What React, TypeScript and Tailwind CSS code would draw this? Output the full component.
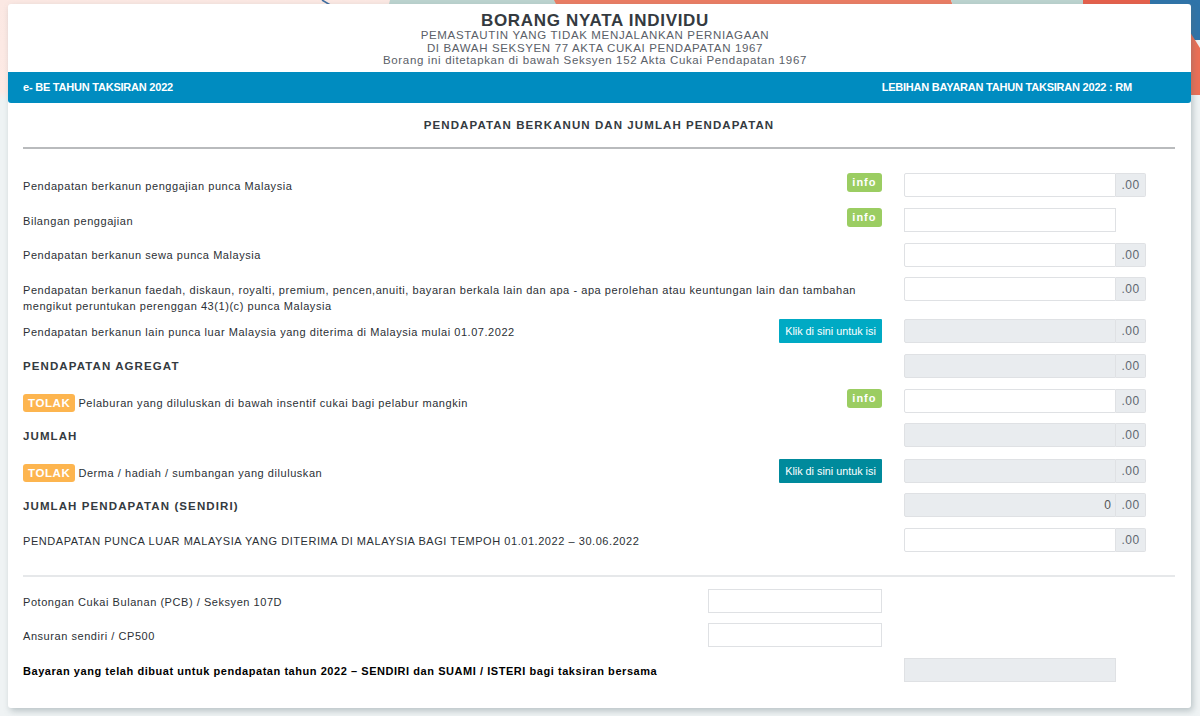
import React from 'react';

const font = { fontFamily: '"Liberation Sans", Arial, sans-serif' };

function Background() {
  return (
    <svg className="absolute inset-0 w-full h-full" viewBox="0 0 1200 716" preserveAspectRatio="none">
      <defs>
        <linearGradient id="left" x1="0" y1="0" x2="0" y2="1">
          <stop offset="0" stopColor="#fbe8e3" />
          <stop offset="0.57" stopColor="#fdeae5" />
          <stop offset="0.63" stopColor="#eef3f4" />
          <stop offset="1" stopColor="#eef3f4" />
        </linearGradient>
      </defs>
      <rect width="1200" height="716" fill="#eff3f4" />
      <rect x="0" y="0" width="400" height="160" fill="url(#left)" />
      <polygon points="390,0 555,0 561,12 387,12" fill="#bcd3cf" />
      <polygon points="554,0 951,0 955,12 560,12" fill="#ea7d64" />
      <polygon points="951,0 1083,0 1085,12 955,12" fill="#bcd3cf" />
      <rect x="1083" y="0" width="68" height="12" fill="#e5604c" />
      <rect x="1150" y="0" width="50" height="40" fill="#2f74a9" />
      <polygon points="1190,32 1200,48 1200,95 1190,95" fill="#ec6f55" />
      <line x1="322" y1="0" x2="332" y2="6" stroke="#3f6ea0" strokeWidth="1.5" />
    </svg>
  );
}

function Info() {
  return (
    <span className="inline-block bg-[#9bcd62] text-white text-[11px] font-bold tracking-[1px] leading-[18px] h-[19px] px-[5.5px] rounded-[3px]">
      info
    </span>
  );
}

function Tolak() {
  return (
    <span className="inline-block bg-[#fdb54f] text-white text-[11.5px] font-bold tracking-[0.6px] leading-[18px] h-[18px] px-[5px] rounded-[3px] mr-[3px]">
      TOLAK
    </span>
  );
}

function KlikBtn({ dark }: { dark?: boolean }) {
  return (
    <button
      className={`h-[24px] w-[103px] text-white text-[10.8px] rounded-[1px] whitespace-nowrap ${dark ? 'bg-[#008a9c]' : 'bg-[#00aac4]'}`}
    >
      Klik di sini untuk isi
    </button>
  );
}

function Amount({ grey, noAddon, value }: { grey?: boolean; noAddon?: boolean; value?: string }) {
  return (
    <div className="flex w-[242px] h-[24px] shrink-0">
      <div
        className={`w-[212px] h-[24px] border border-[#dfe1e4] text-right pr-[4px] text-[12px] leading-[22px] text-[#555] ${noAddon ? '' : 'rounded-l-[2px]'} ${grey ? 'bg-[#e9ecef]' : 'bg-white'}`}
      >
        {value}
      </div>
      {!noAddon && (
        <div className="w-[30px] h-[24px] bg-[#e9ecef] border border-l-0 border-[#dfe1e4] rounded-r-[2px] text-center text-[12px] tracking-[0.5px] leading-[23px] text-[#5f6770]">
          .00
        </div>
      )}
    </div>
  );
}

function Row({ className, side, children, amount }: { className?: string; side?: React.ReactNode; children: React.ReactNode; amount: React.ReactNode }) {
  return (
    <div className={`flex items-start ${className ?? ''}`}>
      <div className="flex-1 min-w-0 text-[11px] tracking-[0.55px] text-[#2b3035]">{children}</div>
      <div className="w-[110px] flex justify-end shrink-0">{side}</div>
      <div className="w-[22px] shrink-0" />
      {amount}
      <div className="w-[29px] shrink-0" />
    </div>
  );
}

function Heading({ children }: { children: React.ReactNode }) {
  return <span className="text-[11.5px] font-bold tracking-[1.1px] text-[#343a40]">{children}</span>;
}

export default function App() {
  return (
    <div className="relative w-[1200px] h-[716px] overflow-hidden" style={font}>
      <Background />
      <div className="relative pt-[4px] pl-[8px]">
        <div className="w-[1183px] h-[704px] bg-white rounded-[3px] shadow-[2px_3px_6px_rgba(90,110,115,0.35)]">
          <div className="h-[68px] pt-[9px] pr-[9px] text-center text-[#5a6068]">
            <h1 className="text-[17px] leading-[16px] font-bold tracking-[0.7px] text-[#343a40]">BORANG NYATA INDIVIDU</h1>
            <p className="text-[11.5px] leading-[12.5px] tracking-[0.65px]">PEMASTAUTIN YANG TIDAK MENJALANKAN PERNIAGAAN</p>
            <p className="text-[11.5px] leading-[12.5px] tracking-[0.65px]">DI BAWAH SEKSYEN 77 AKTA CUKAI PENDAPATAN 1967</p>
            <p className="text-[11.5px] leading-[12.5px] tracking-[0.65px]">Borang ini ditetapkan di bawah Seksyen 152 Akta Cukai Pendapatan 1967</p>
          </div>

          <div className="h-[31px] bg-[#008cc0] rounded-b-[3px] flex items-center justify-between pl-[15px] pr-[59px] text-white text-[11px] font-bold tracking-[-0.22px]">
            <span>e- BE TAHUN TAKSIRAN 2022</span>
            <span>LEBIHAN BAYARAN TAHUN TAKSIRAN 2022 : RM</span>
          </div>

          <div className="pl-[15px] pr-[16px]">
            <div className="h-[46px] border-b-2 border-[#b9bbbd] text-center text-[11.5px] font-bold tracking-[1.08px] text-[#343a40] pt-[15px] leading-[14px]">
              PENDAPATAN BERKANUN DAN JUMLAH PENDAPATAN
            </div>

            <Row className="mt-[24px]" side={<Info />} amount={<Amount />}>
              <div className="pt-[5px]">Pendapatan berkanun penggajian punca Malaysia</div>
            </Row>
            <Row className="mt-[11px]" side={<Info />} amount={<Amount noAddon />}>
              <div className="pt-[5px]">Bilangan penggajian</div>
            </Row>
            <Row className="mt-[11px]" amount={<Amount />}>
              <div className="pt-[4px]">Pendapatan berkanun sewa punca Malaysia</div>
            </Row>
            <Row className="mt-[10px] h-[42px]" amount={<Amount />}>
              <div className="w-[840px] pt-[5px] leading-[16px]">
                Pendapatan berkanun faedah, diskaun, royalti, premium, pencen,anuiti, bayaran berkala lain dan apa - apa perolehan atau keuntungan lain dan tambahan mengikut peruntukan perenggan 43(1)(c) punca Malaysia
              </div>
            </Row>
            <Row side={<KlikBtn />} amount={<Amount grey />}>
              <div className="pt-[5px]">Pendapatan berkanun lain punca luar Malaysia yang diterima di Malaysia mulai 01.07.2022</div>
            </Row>
            <Row className="mt-[11px]" amount={<Amount grey />}>
              <div className="pt-[4px]"><Heading>PENDAPATAN AGREGAT</Heading></div>
            </Row>
            <Row className="mt-[11px]" side={<Info />} amount={<Amount />}>
              <div className="pt-[5px] flex items-center"><Tolak />Pelaburan yang diluluskan di bawah insentif cukai bagi pelabur mangkin</div>
            </Row>
            <Row className="mt-[10px]" amount={<Amount grey />}>
              <div className="pt-[5px]"><Heading>JUMLAH</Heading></div>
            </Row>
            <Row className="mt-[12px]" side={<KlikBtn dark />} amount={<Amount grey />}>
              <div className="pt-[5px] flex items-center"><Tolak />Derma / hadiah / sumbangan yang diluluskan</div>
            </Row>
            <Row className="mt-[10px]" amount={<Amount grey value="0" />}>
              <div className="pt-[5px]"><Heading>JUMLAH PENDAPATAN (SENDIRI)</Heading></div>
            </Row>
            <Row className="mt-[11px]" amount={<Amount />}>
              <div className="pt-[5px]">PENDAPATAN PUNCA LUAR MALAYSIA YANG DITERIMA DI MALAYSIA BAGI TEMPOH 01.01.2022 – 30.06.2022</div>
            </Row>

            <div className="mt-[23px] border-t-2 border-[#e6e8ea]" />

            <div className="mt-[12px] flex items-start text-[11px] tracking-[0.55px] text-[#2b3035]">
              <div className="w-[685px] pt-[5px]">Potongan Cukai Bulanan (PCB) / Seksyen 107D</div>
              <div className="w-[174px] h-[24px] border border-[#dfe1e4]" />
            </div>
            <div className="mt-[10px] flex items-start text-[11px] tracking-[0.55px] text-[#2b3035]">
              <div className="w-[685px] pt-[5px]">Ansuran sendiri / CP500</div>
              <div className="w-[174px] h-[24px] border border-[#dfe1e4]" />
            </div>
            <div className="mt-[11px] flex items-start">
              <div className="w-[881px] pt-[5px] text-[11px] font-bold tracking-[0.55px] text-black">
                Bayaran yang telah dibuat untuk pendapatan tahun 2022 – SENDIRI dan SUAMI / ISTERI bagi taksiran bersama
              </div>
              <div className="w-[212px] h-[24px] bg-[#e9ecef] border border-[#dfe1e4]" />
            </div>
          </div>
        </div>
      </div>
    </div>
  );
}
